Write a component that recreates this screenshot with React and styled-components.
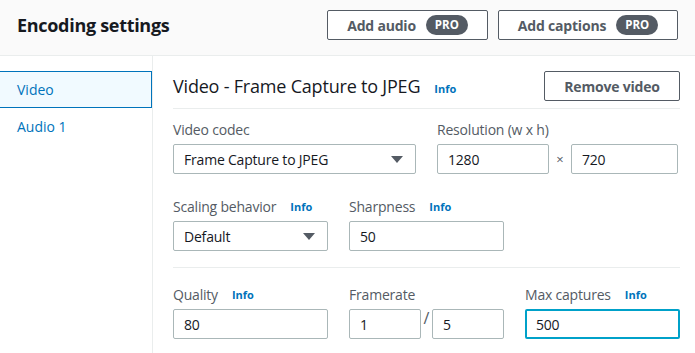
import React from "react";
import styled, { createGlobalStyle } from "styled-components";

const GlobalStyle = createGlobalStyle`
  * { box-sizing: border-box; }
  body {
    margin: 0;
    background: #ffffff;
    font-family: "Open Sans", "Noto Sans", Arial, sans-serif;
    color: #16191f;
  }
`;

const Page = styled.div`
  width: 695px;
  height: 353px;
  overflow: hidden;
  display: flex;
  flex-direction: column;
`;

const Header = styled.div`
  height: 56px;
  flex: none;
  background: #fafafa;
  border-bottom: 1px solid #eaeded;
  display: flex;
  align-items: flex-start;
  padding: 10px 17px 0;
`;

const Title = styled.h2`
  margin: 0;
  font-size: 18px;
  font-weight: 700;
  line-height: 30px;
  letter-spacing: -0.3px;
  color: #16191f;
  flex: 1;
`;

const Actions = styled.div`
  display: flex;
  gap: 10px;
`;

const OutlineButton = styled.button`
  height: 30px;
  width: ${(p) => p.$width}px;
  background: #ffffff;
  border: 1px solid #545b64;
  border-radius: 2px;
  color: #545b64;
  font-family: inherit;
  font-size: 14px;
  font-weight: 700;
  letter-spacing: -0.2px;
  display: flex;
  align-items: center;
  justify-content: center;
  gap: 10px;
  padding: 0;
  cursor: pointer;
`;

const Pro = styled.span`
  background: #545b64;
  color: #ffffff;
  font-size: 11.5px;
  font-weight: 700;
  border-radius: 10px;
  padding: 3px 9px;
  line-height: 14px;
  letter-spacing: 0;
`;

const Body = styled.div`
  flex: 1;
  display: flex;
`;

const Nav = styled.div`
  width: 153px;
  flex: none;
  border-right: 1px solid #eaeded;
  padding-top: 15px;
`;

const NavItem = styled.div`
  height: 37px;
  display: flex;
  align-items: center;
  padding-left: 17px;
  font-size: 14px;
  color: #0073bb;
  background: ${(p) => (p.$active ? "#f1faff" : "transparent")};
  border: 1px solid ${(p) => (p.$active ? "#0073bb" : "transparent")};
  border-left: none;
`;

const Content = styled.div`
  flex: 1;
  padding: 15px 16px 0 20px;
`;

const SectionHead = styled.div`
  display: flex;
  align-items: center;
  height: 30px;
`;

const SectionTitle = styled.h3`
  margin: 0;
  font-size: 18px;
  font-weight: 400;
  letter-spacing: -0.2px;
  color: #16191f;
  flex: 1;
  display: flex;
  align-items: baseline;
  gap: 14px;
`;

const Info = styled.a`
  color: #0073bb;
  font-size: 11px;
  font-weight: 700;
  text-decoration: none;
  letter-spacing: 0;
`;

const Divider = styled.div`
  height: 1px;
  background: #eaeded;
  margin: ${(p) => p.$margin};
`;

const Row = styled.div`
  display: flex;
  gap: 21px;
  margin-top: ${(p) => p.$top}px;
`;

const Field = styled.div`
  width: ${(p) => p.$width}px;
  display: flex;
  flex-direction: column;
`;

const Label = styled.div`
  font-size: 14px;
  color: #545b64;
  height: 22px;
  margin-bottom: 4px;
  display: flex;
  align-items: center;
  gap: 14px;
  letter-spacing: -0.2px;
`;

const Box = styled.div`
  height: 30px;
  width: ${(p) => (p.$width ? `${p.$width}px` : "100%")};
  border: ${(p) => (p.$focus ? "2px solid #00a1c9" : "1px solid #aab7b8")};
  border-radius: 2px;
  background: #ffffff;
  display: flex;
  align-items: center;
  padding: 0 ${(p) => (p.$focus ? 9 : 10)}px;
  font-size: 14px;
  color: #16191f;
  letter-spacing: -0.2px;
`;

const SelectText = styled.span`
  flex: 1;
`;

const Caret = styled.span`
  width: 0;
  height: 0;
  border-left: 6px solid transparent;
  border-right: 6px solid transparent;
  border-top: 7px solid #545b64;
  margin-right: 2px;
`;

const Pair = styled.div`
  display: flex;
  align-items: center;
`;

const Sep = styled.span`
  width: ${(p) => p.$w}px;
  text-align: center;
  font-size: ${(p) => p.$size}px;
  color: #545b64;
  align-self: ${(p) => (p.$top ? "flex-start" : "center")};
  line-height: ${(p) => (p.$top ? "18px" : "normal")};
`;

function Select({ value }) {
  return (
    <Box>
      <SelectText>{value}</SelectText>
      <Caret />
    </Box>
  );
}

export default function App() {
  return (
    <Page>
      <GlobalStyle />
      <Header>
        <Title>Encoding settings</Title>
        <Actions>
          <OutlineButton $width={161}>
            Add audio <Pro>PRO</Pro>
          </OutlineButton>
          <OutlineButton $width={180}>
            Add captions <Pro>PRO</Pro>
          </OutlineButton>
        </Actions>
      </Header>
      <Body>
        <Nav>
          <NavItem $active>Video</NavItem>
          <NavItem>Audio 1</NavItem>
        </Nav>
        <Content>
          <SectionHead>
            <SectionTitle>
              Video - Frame Capture to JPEG <Info>Info</Info>
            </SectionTitle>
            <OutlineButton $width={136}>Remove video</OutlineButton>
          </SectionHead>
          <Divider $margin="7px 0 0" />
          <Row $top={9}>
            <Field $width={243}>
              <Label>Video codec</Label>
              <Select value="Frame Capture to JPEG" />
            </Field>
            <Field $width={241}>
              <Label>Resolution (w x h)</Label>
              <Pair>
                <Box $width={112}>1280</Box>
                <Sep $w={22} $size={13}>×</Sep>
                <Box $width={107}>720</Box>
              </Pair>
            </Field>
          </Row>
          <Row $top={21}>
            <Field $width={155}>
              <Label>
                Scaling behavior <Info>Info</Info>
              </Label>
              <Select value="Default" />
            </Field>
            <Field $width={155}>
              <Label>
                Sharpness <Info>Info</Info>
              </Label>
              <Box>50</Box>
            </Field>
          </Row>
          <Divider $margin="16px 0 0" />
          <Row $top={15}>
            <Field $width={155}>
              <Label>
                Quality <Info>Info</Info>
              </Label>
              <Box>80</Box>
            </Field>
            <Field $width={155}>
              <Label>Framerate</Label>
              <Pair>
                <Box $width={72}>1</Box>
                <Sep $w={11} $size={16} $top>/</Sep>
                <Box $width={72}>5</Box>
              </Pair>
            </Field>
            <Field $width={155}>
              <Label>
                Max captures <Info>Info</Info>
              </Label>
              <Box $focus>500</Box>
            </Field>
          </Row>
        </Content>
      </Body>
    </Page>
  );
}
